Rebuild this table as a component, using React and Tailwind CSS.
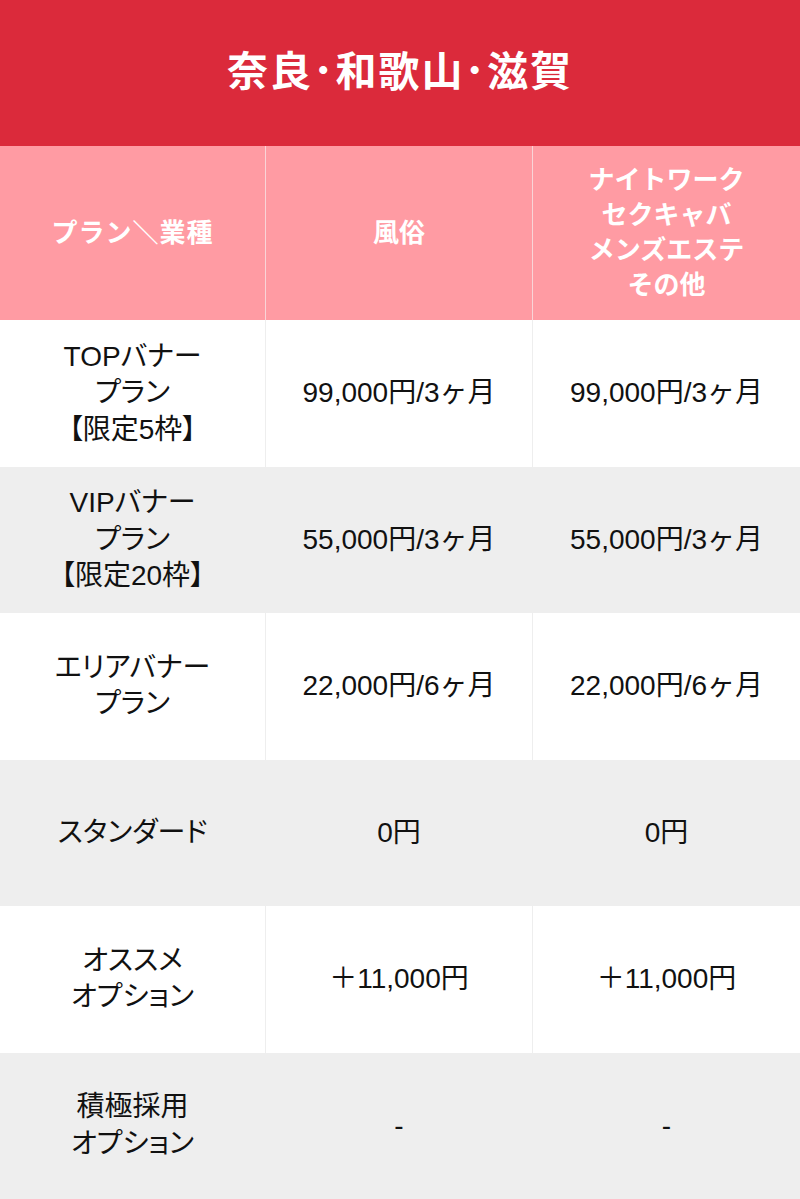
import React from "react";

const font = { fontFamily: '"Liberation Sans", "Noto Sans CJK JP", sans-serif' };

const rows = [
  { plan: ["TOPバナー", "プラン", "【限定5枠】"], a: "99,000円/3ヶ月", b: "99,000円/3ヶ月" },
  { plan: ["VIPバナー", "プラン", "【限定20枠】"], a: "55,000円/3ヶ月", b: "55,000円/3ヶ月" },
  { plan: ["エリアバナー", "プラン"], a: "22,000円/6ヶ月", b: "22,000円/6ヶ月" },
  { plan: ["スタンダード"], a: "0円", b: "0円" },
  { plan: ["オススメ", "オプション"], a: "＋11,000円", b: "＋11,000円" },
  { plan: ["積極採用", "オプション"], a: "-", b: "-" },
];

const Cell = ({ children, last, className = "" }) => (
  <div
    className={`flex items-center justify-center text-center ${last ? "" : "border-r border-[#eeeeee]"} ${className}`}
  >
    {children}
  </div>
);

export default function App() {
  return (
    <div className="w-[800px] h-[1199px] bg-white overflow-hidden" style={font}>
      <div className="h-[146px] bg-[#db2a3b] flex items-center justify-center">
        <h1 className="text-[41px] font-bold text-white tracking-[2px]">奈良･和歌山･滋賀</h1>
      </div>

      <div className="grid grid-cols-[266px_267px_267px] h-[174px] bg-[#ff9ba3] text-white font-bold text-[26px] leading-[35px]">
        <Cell className="border-[#f9d4d7] tracking-[1px]">プラン＼業種</Cell>
        <Cell className="border-[#f9d4d7]">風俗</Cell>
        <Cell last>
          <div>
            <div>ナイトワーク</div>
            <div>セクキャバ</div>
            <div>メンズエステ</div>
            <div>その他</div>
          </div>
        </Cell>
      </div>

      {rows.map((row, i) => (
        <div
          key={i}
          className={`grid grid-cols-[266px_267px_267px] h-[146.5px] text-[28px] leading-[36.5px] text-[#111] ${
            i % 2 === 1 ? "bg-[#eeeeee]" : "bg-white"
          }`}
        >
          <Cell className="[font-feature-settings:'palt']">
            <div>
              {row.plan.map((line) => (
                <div key={line}>{line}</div>
              ))}
            </div>
          </Cell>
          <Cell>{row.a}</Cell>
          <Cell last>{row.b}</Cell>
        </div>
      ))}
    </div>
  );
}
